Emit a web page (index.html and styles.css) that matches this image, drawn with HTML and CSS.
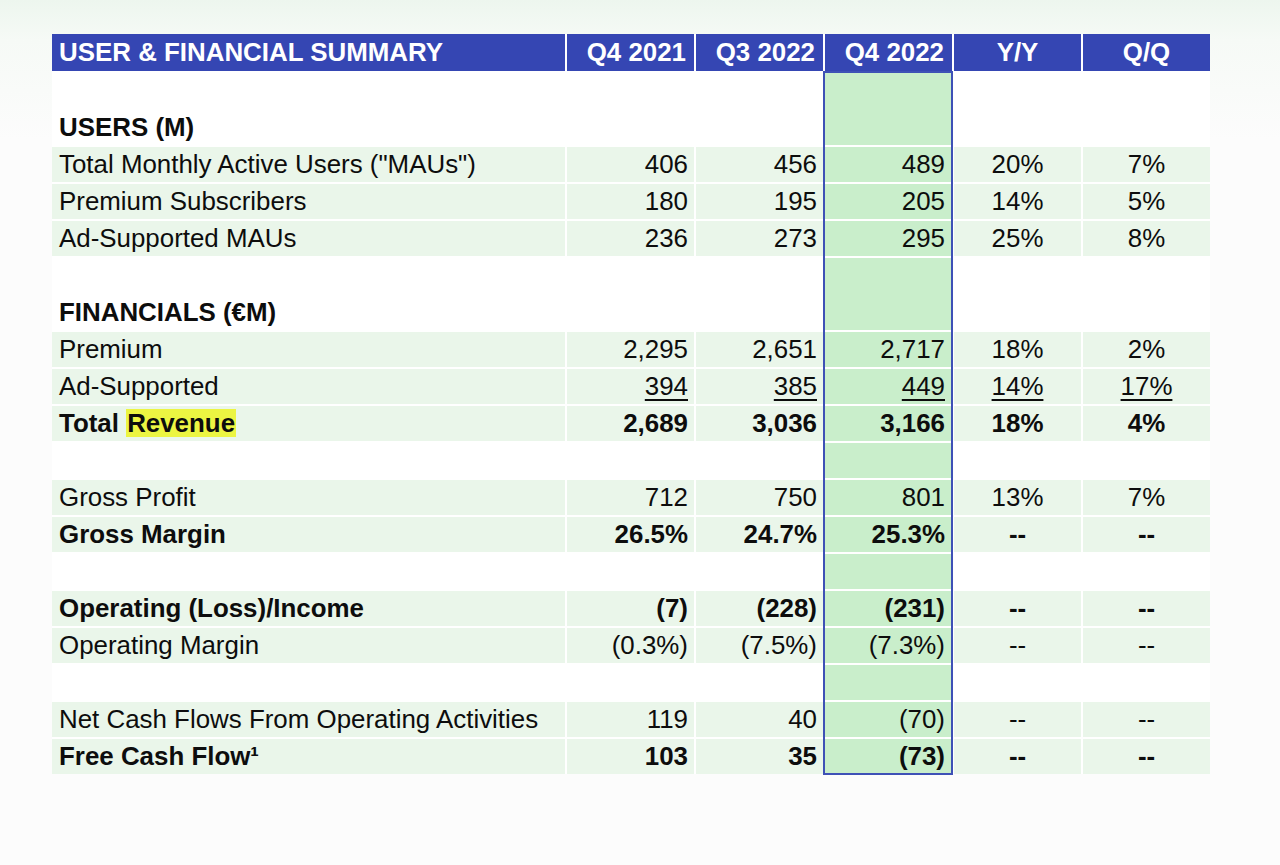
FILE: index.html
```html
<!DOCTYPE html>
<html lang="en">
<head>
<meta charset="utf-8">
<title>User &amp; Financial Summary</title>
<link rel="stylesheet" href="styles.css">
</head>
<body>
<main class="page">
  <div class="table">
    <div class="row head">
      <div class="c lbl">USER &amp; FINANCIAL SUMMARY</div>
      <div class="c num">Q4 2021</div>
      <div class="c num">Q3 2022</div>
      <div class="c num">Q4 2022</div>
      <div class="c ctr">Y/Y</div>
      <div class="c ctr">Q/Q</div>
    </div>

    <div class="row sec first">
      <div class="c lbl">USERS (M)</div>
      <div class="c"></div><div class="c"></div><div class="c hl"></div><div class="c"></div><div class="c"></div>
    </div>
    <div class="row">
      <div class="c lbl">Total Monthly Active Users ("MAUs")</div>
      <div class="c num">406</div><div class="c num">456</div><div class="c num hl">489</div><div class="c ctr">20%</div><div class="c ctr">7%</div>
    </div>
    <div class="row">
      <div class="c lbl">Premium Subscribers</div>
      <div class="c num">180</div><div class="c num">195</div><div class="c num hl">205</div><div class="c ctr">14%</div><div class="c ctr">5%</div>
    </div>
    <div class="row">
      <div class="c lbl">Ad-Supported MAUs</div>
      <div class="c num">236</div><div class="c num">273</div><div class="c num hl">295</div><div class="c ctr">25%</div><div class="c ctr">8%</div>
    </div>

    <div class="row sec">
      <div class="c lbl">FINANCIALS (€M)</div>
      <div class="c"></div><div class="c"></div><div class="c hl"></div><div class="c"></div><div class="c"></div>
    </div>
    <div class="row">
      <div class="c lbl">Premium</div>
      <div class="c num">2,295</div><div class="c num">2,651</div><div class="c num hl">2,717</div><div class="c ctr">18%</div><div class="c ctr">2%</div>
    </div>
    <div class="row">
      <div class="c lbl">Ad-Supported</div>
      <div class="c num"><span class="ul">394</span></div><div class="c num"><span class="ul">385</span></div><div class="c num hl"><span class="ul">449</span></div><div class="c ctr"><span class="ul">14%</span></div><div class="c ctr"><span class="ul">17%</span></div>
    </div>
    <div class="row bold">
      <div class="c lbl">Total <span class="mark">Revenue</span></div>
      <div class="c num">2,689</div><div class="c num">3,036</div><div class="c num hl">3,166</div><div class="c ctr">18%</div><div class="c ctr">4%</div>
    </div>

    <div class="row spacer">
      <div class="c"></div><div class="c"></div><div class="c"></div><div class="c hl"></div><div class="c"></div><div class="c"></div>
    </div>
    <div class="row">
      <div class="c lbl">Gross Profit</div>
      <div class="c num">712</div><div class="c num">750</div><div class="c num hl">801</div><div class="c ctr">13%</div><div class="c ctr">7%</div>
    </div>
    <div class="row bold">
      <div class="c lbl">Gross Margin</div>
      <div class="c num">26.5%</div><div class="c num">24.7%</div><div class="c num hl">25.3%</div><div class="c ctr">--</div><div class="c ctr">--</div>
    </div>

    <div class="row spacer">
      <div class="c"></div><div class="c"></div><div class="c"></div><div class="c hl"></div><div class="c"></div><div class="c"></div>
    </div>
    <div class="row bold">
      <div class="c lbl">Operating (Loss)/Income</div>
      <div class="c num">(7)</div><div class="c num">(228)</div><div class="c num hl">(231)</div><div class="c ctr">--</div><div class="c ctr">--</div>
    </div>
    <div class="row">
      <div class="c lbl">Operating Margin</div>
      <div class="c num">(0.3%)</div><div class="c num">(7.5%)</div><div class="c num hl">(7.3%)</div><div class="c ctr">--</div><div class="c ctr">--</div>
    </div>

    <div class="row spacer">
      <div class="c"></div><div class="c"></div><div class="c"></div><div class="c hl"></div><div class="c"></div><div class="c"></div>
    </div>
    <div class="row">
      <div class="c lbl">Net Cash Flows From Operating Activities</div>
      <div class="c num">119</div><div class="c num">40</div><div class="c num hl">(70)</div><div class="c ctr">--</div><div class="c ctr">--</div>
    </div>
    <div class="row bold">
      <div class="c lbl">Free Cash Flow¹</div>
      <div class="c num">103</div><div class="c num">35</div><div class="c num hl">(73)</div><div class="c ctr">--</div><div class="c ctr">--</div>
    </div>

    <div class="hl-frame" aria-hidden="true"></div>
  </div>
</main>
</body>
</html>
```

FILE: styles.css
```css
html, body {
  margin: 0;
  padding: 0;
}

body {
  min-height: 865px;
  background: linear-gradient(to bottom, #edf6ee 0px, #f6faf6 40px, #fcfcfc 140px, #fcfcfc 100%);
  font-family: "Liberation Sans", Arial, sans-serif;
  color: #0d0d0d;
}

.page {
  padding: 34px 0 0 52px;
}

.table {
  --lbl-w: 513px;
  --col-w: 127px;
  --gap: 2px;
  position: relative;
  display: grid;
  grid-template-columns: var(--lbl-w) repeat(5, var(--col-w));
  column-gap: var(--gap);
  row-gap: var(--gap);
  width: 1158px;
  background: #ffffff;
  font-size: 25.9px;
}

.row {
  display: contents;
}

.c {
  height: 35px;
  line-height: 35px;
  padding: 0 6px;
  background: #eaf6ea;
  white-space: nowrap;
  box-sizing: border-box;
}

.c.lbl {
  padding-left: 7px;
}

.num {
  text-align: right;
}

.ctr {
  text-align: center;
}

.c.hl {
  background: #c9eecb;
  padding-right: 7px;
}

/* header */
.head .c {
  height: 37px;
  line-height: 37px;
  margin-bottom: -2px;
  background: #3546b3;
  color: #ffffff;
  font-weight: bold;
}

.head .c.num {
  padding-right: 8px;
}

/* section headings */
.sec .c {
  height: 72px;
  padding-top: 37px;
  background: #ffffff;
  font-weight: bold;
}

.sec.first .c {
  height: 74px;
  padding-top: 39px;
}

.sec .c.hl {
  background: #c9eecb;
}

/* spacer rows */
.spacer .c {
  background: #ffffff;
}

.spacer .c.hl {
  background: #c9eecb;
}

.bold .c {
  font-weight: bold;
}

.ul {
  text-decoration: underline;
  text-decoration-thickness: 2px;
  text-underline-offset: 4px;
}

.mark {
  background: #ecf542;
  padding: 0 1px;
}

/* outline of the highlighted Q4 2022 column, drawn over the cells */
.hl-frame {
  position: absolute;
  top: 37px;
  left: calc(var(--lbl-w) + 2 * var(--col-w) + 3 * var(--gap) - 2px);
  width: 130px;
  height: 704px;
  box-sizing: border-box;
  border: 2px solid #3e51b6;
  pointer-events: none;
}
```
